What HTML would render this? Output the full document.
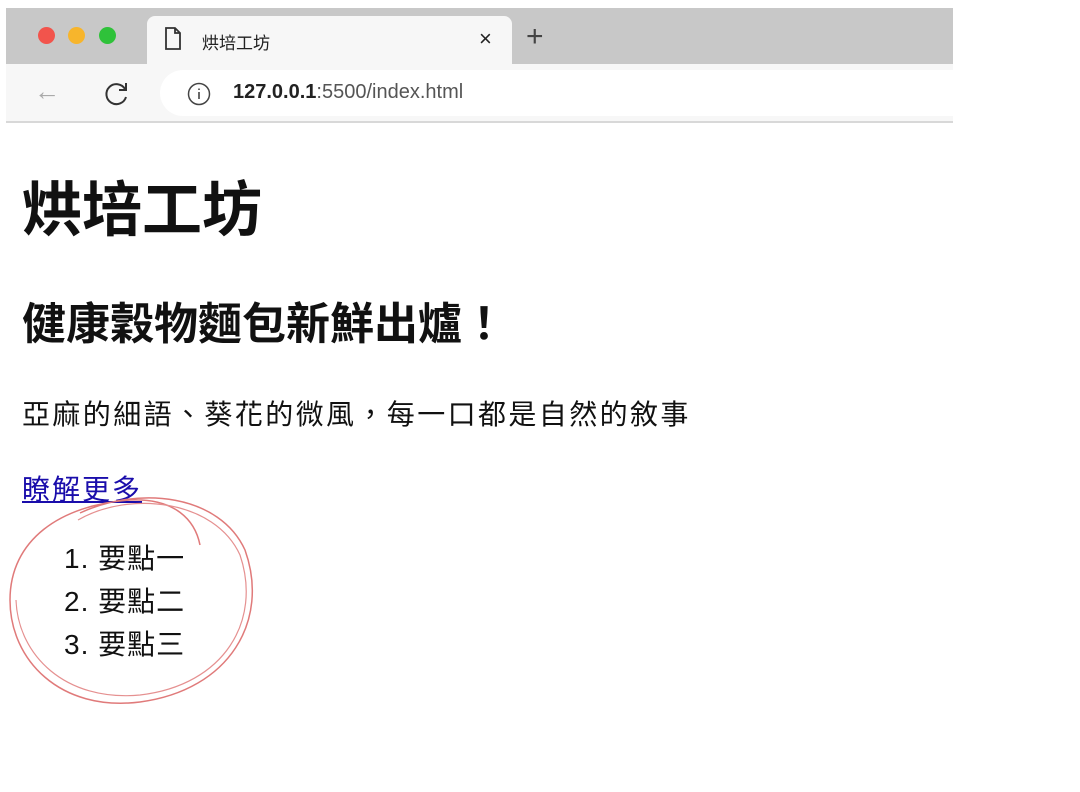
<!DOCTYPE html>
<html><head><meta charset="utf-8"><style>
*{margin:0;padding:0;box-sizing:border-box}
body{width:1080px;height:792px;background:#fff;position:relative;overflow:hidden;font-family:"Liberation Sans","Noto Sans CJK TC",sans-serif;color:#111}
.abs{position:absolute}
</style></head><body>
<div class="abs" style="left:6px;top:8px;width:947px;height:56px;background:#c8c8c8"></div>
<div class="abs" style="left:38px;top:27px;width:17px;height:17px;border-radius:50%;background:#f2544c"></div>
<div class="abs" style="left:68px;top:27px;width:17px;height:17px;border-radius:50%;background:#f7b52c"></div>
<div class="abs" style="left:99px;top:27px;width:17px;height:17px;border-radius:50%;background:#2fc23a"></div>
<div class="abs" style="left:147px;top:16px;width:365px;height:50px;background:#f7f7f7;border-radius:8px 8px 0 0"></div>
<svg class="abs" style="left:162px;top:26px" width="22" height="26" viewBox="0 0 22 26"><path d="M4 2h9l5 5v16H4z M13 2v5h5" fill="none" stroke="#333" stroke-width="1.8"/></svg>
<div class="abs" style="left:202px;top:29px;font-size:17px;color:#222">烘培工坊</div>
<div class="abs" style="left:479px;top:26px;font-size:22px;color:#222">×</div>
<div class="abs" style="left:526px;top:20px;font-size:30px;color:#444;font-weight:300">+</div>
<div class="abs" style="left:6px;top:64px;width:947px;height:57px;background:#f7f7f7"></div>
<div class="abs" style="left:6px;top:121px;width:947px;height:2px;background:#d8d8d8"></div>
<div class="abs" style="left:34px;top:76px;font-size:26px;color:#aaa">←</div>
<svg class="abs" style="left:103px;top:80px" width="28" height="28" viewBox="0 0 28 28"><path d="M22 9A10 10 0 1 0 23 17" fill="none" stroke="#333" stroke-width="2"/><path d="M23 3v7h-7" fill="none" stroke="#333" stroke-width="2"/></svg>
<div class="abs" style="left:160px;top:70px;width:793px;height:46px;background:#fff;border-radius:23px 0 0 23px"></div>
<svg class="abs" style="left:186px;top:81px" width="26" height="26" viewBox="0 0 26 26"><circle cx="13" cy="13" r="10.5" fill="none" stroke="#444" stroke-width="1.5"/><path d="M13 11v7M13 7.5v1.5" stroke="#444" stroke-width="1.6"/></svg>
<div class="abs" style="left:233px;top:81px;font-size:20px;color:#555"><b style="color:#222;font-weight:600">127.0.0.1</b>:5500/index.html</div>
<div class="abs" style="left:22px;top:162px;font-size:60px;font-weight:bold;color:#111">烘培工坊</div>
<div class="abs" style="left:22px;top:288px;font-size:44px;font-weight:bold;color:#111">健康穀物麵包新鮮出爐！</div>
<div class="abs" style="left:22px;top:393px;font-size:28px;letter-spacing:2.4px">亞麻的細語、葵花的微風，每一口都是自然的敘事</div>
<div class="abs" style="left:22px;top:468px;font-size:28px;letter-spacing:2px;color:#1a0dab;text-decoration:underline">瞭解更多</div>
<div class="abs" style="left:64px;top:537px;font-size:28px;line-height:43px;letter-spacing:1px">1. 要點一<br>2. 要點二<br>3. 要點三</div>
<svg class="abs" style="left:0;top:480px" width="280" height="240" viewBox="0 0 280 240"><path d="M80 33C140 5 220 15 245 70 C270 140 230 210 140 222 C60 232 10 180 10 120 C10 60 60 25 130 20 C175 18 195 40 200 65" fill="none" stroke="#e07a7a" stroke-width="1.5"/><path d="M78 40C130 10 215 20 240 75 C262 140 225 205 140 215 C65 222 18 175 16 120" fill="none" stroke="#e59090" stroke-width="1.2"/></svg>
</body></html>
